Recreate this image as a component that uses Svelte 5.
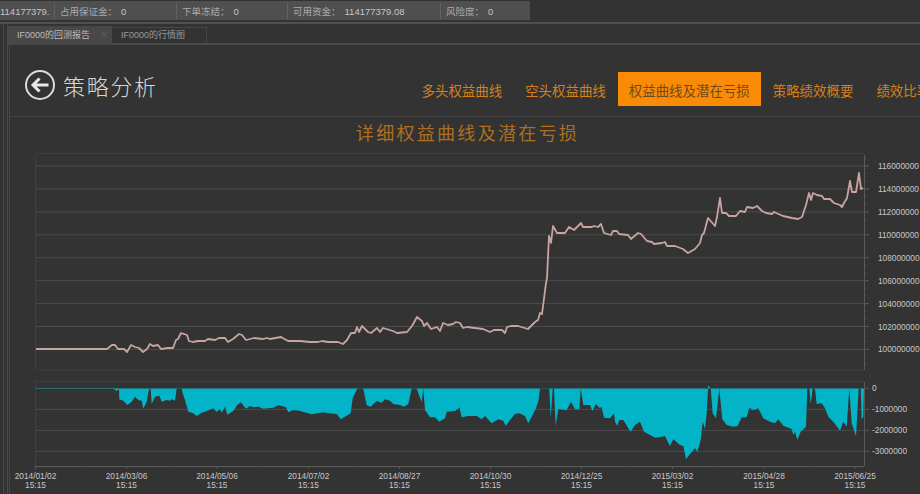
<script>
  const stats = [
    { label: '', value: '114177379.', w: 55 },
    { label: '占用保证金：', value: '0', w: 122 },
    { label: '下单冻结：', value: '0', w: 111 },
    { label: '可用资金：', value: '114177379.08', w: 153 },
    { label: '风险度：', value: '0', w: 89 }
  ];
  const nav = ['多头权益曲线', '空头权益曲线', '权益曲线及潜在亏损', '策略绩效概要', '绩效比率'];

  const equity = [36,349,107,349,112,345,115,345,118,349,124,349,127,352,131,345,135,347,139,348,143,352,147,349,150,344,153,346,158,345,161,349,168,348,173,348,176,340,178,339,181,333,187,335,189,341,193,342,198,341,205,341,208,339,215,340,219,338,225,338,228,342,233,339,239,334,242,335,246,340,254,338,263,339,267,338,270,339,281,337,288,341,300,341,310,342,318,342,322,341,328,342,338,342,343,344,347,340,351,333,355,333,357,327,359,332,362,326,368,332,371,333,377,328,380,332,383,328,393,331,397,333,407,332,412,326,417,317,422,321,424,326,427,323,431,329,437,327,440,331,443,323,448,325,453,324,456,322,460,323,463,328,467,327,483,329,490,332,494,330,502,330,505,333,507,327,511,326,518,326,528,329,535,322,538,320,540,313,542,314,546,283,547,278,549,236,551,243,553,226,557,233,565,233,569,227,574,230,581,223,583,227,592,227,594,226,598,227,601,224,604,233,611,235,613,231,617,231,619,234,628,235,631,239,638,233,641,234,647,241,652,242,654,244,662,243,665,242,667,246,675,246,683,249,688,253,695,249,700,243,702,235,704,233,708,218,715,226,717,217,720,198,722,213,726,213,729,216,736,216,740,211,745,212,747,207,753,208,757,206,762,211,766,213,772,214,774,212,783,216,792,218,798,219,802,217,806,205,809,193,811,200,813,193,817,195,822,196,824,199,830,199,834,203,840,205,842,207,844,203,847,198,850,181,852,192,856,192,859,173,861,189,863,188];
  const equityPoints = equity.join(' ');

  // Drawdown traces, read at 3x from the two halves of the lower pane.
  const ddLeft = [340,176,350,183,357,178,358,208,370,212,382,225,395,215,405,200,415,210,425,212,430,236,440,215,447,178,452,178,455,222,465,200,478,197,485,215,500,210,510,212,515,208,525,212,530,176,545,176,548,190,555,210,565,245,580,250,590,258,605,248,620,243,640,235,650,246,660,237,665,248,675,230,682,254,700,243,712,225,722,217,738,236,750,228,760,232,775,230,790,236,820,233,835,226,845,228,858,232,865,247,880,240,900,243,935,253,970,247,985,250,1010,252,1022,268,1040,257,1052,250,1058,205,1072,176,1090,176,1100,226,1112,230,1130,213,1145,218,1155,208,1170,212,1180,222,1200,225,1212,230,1225,222,1235,176,1250,176,1265,217,1270,176,1275,240,1290,262,1305,262,1318,275,1335,265,1340,245,1365,243,1380,232];
  const ddRight = [0,240,5,262,25,258,50,258,65,268,75,258,95,280,115,268,130,272,137,288,150,270,165,252,178,250,195,258,205,280,215,260,228,235,235,215,240,176,262,176,268,176,272,265,278,176,282,176,287,288,295,237,320,240,333,215,345,238,358,238,362,176,370,225,390,225,397,243,408,222,418,233,425,232,432,263,450,265,462,250,465,275,472,288,478,270,490,270,505,295,512,305,525,285,540,275,552,305,565,312,585,323,605,320,615,318,630,348,640,328,660,345,670,348,678,388,690,372,705,355,712,365,722,330,728,275,735,297,740,250,745,165,752,176,758,250,768,265,778,176,787,268,800,285,820,290,833,288,845,262,860,262,868,233,880,240,895,235,910,265,930,275,945,280,955,268,970,287,995,297,1000,315,1005,305,1012,330,1022,305,1038,290,1042,176,1048,176,1052,222,1058,176,1065,176,1070,222,1085,220,1095,235,1105,260,1120,275,1140,302,1150,275,1160,290,1168,176,1175,280,1188,318,1196,176,1202,176,1205,268,1210,262];
  const toPage = (arr, dx) => {
    const out = [];
    for (let i = 0; i < arr.length; i += 2) out.push(`${(dx + arr[i] / 3).toFixed(1)},${(330 + arr[i + 1] / 3).toFixed(1)}`);
    return out;
  };
  const ddPoints = ['113,388.4', ...toPage(ddLeft, 0), ...toPage(ddRight, 460), '864,388.4'].join(' ');

  const upperTicks = ['116000000','114000000','112000000','110000000','108000000','106000000','104000000','102000000','100000000']
    .map((label, i) => ({ label, y: 166 + i * 22.93 }));
  const upperMinor = [];
  for (let y = 158.3; y < 370; y += 7.64) upperMinor.push(y);
  const lowerTicks = [
    { label: '0', y: 388.4 },
    { label: '-1000000', y: 409.4 },
    { label: '-2000000', y: 430.4 },
    { label: '-3000000', y: 451.4 }
  ];
  const dates = ['2014/01/02','2014/03/06','2014/05/06','2014/07/02','2014/08/27','2014/10/30','2014/12/25','2015/03/02','2015/04/28','2015/06/25'];
  const xs = [35.5, 126.5, 217, 308.5, 399.5, 490.5, 581.5, 672.5, 764, 855];
</script>

<div class="app">
  <div class="status">
    {#each stats as s}
      <div class="stat" style:width="{s.w}px">
        {#if s.label}<span class="stat-label">{s.label}</span>{/if}<span class="stat-value">{s.value}</span>
      </div>
    {/each}
  </div>

  <div class="shell">
    <div class="rail">
      <div class="stage">
        <div class="tabs">
          <div class="tab active">IF0000的回测报告<span class="close">×</span></div>
          <div class="tab">IF0000的行情图</div>
        </div>

        <div class="panel">
          <header class="head">
            <div class="brand">
              <svg class="back" viewBox="0 0 32 32" width="32" height="32" aria-hidden="true">
                <circle cx="16" cy="16" r="14" fill="none" stroke="#dcdcdc" stroke-width="2" />
                <path d="M24.5 16H9.5M15.5 9.5L9 16l6.5 6.500" fill="none" stroke="#e8e8e8" stroke-width="3" />
              </svg>
              <h1>策略分析</h1>
            </div>
            <nav class="nav">
              {#each nav as item, i}
                <div class="nav-item" class:on={i === 2}>{item}</div>
              {/each}
            </nav>
          </header>

          <h2 class="title">详细权益曲线及潜在亏损</h2>

          <svg class="chart" viewBox="10 145 910 349" width="910" height="349">
            <path class="frame" d="M35.500 370V153.500H864M35.500 370H864M35.500 466V381.500H864" />
            {#each upperTicks as t}
              <line class="grid" x1="36" x2="864" y1={t.y} y2={t.y} />
            {/each}
            {#each [409.4, 430.4, 451.4] as y}
              <line class="grid" x1="36" x2="864" y1={y} y2={y} />
            {/each}
            <line class="base" x1="35" x2="114" y1="388.4" y2="388.4" />

            <polygon class="dd" points={ddPoints} />
            <polyline class="equity" points={equityPoints} />

            <line class="axis" x1="864.500" x2="864.500" y1="155" y2="370" />
            <line class="axis" x1="864.500" x2="864.500" y1="382" y2="466" />
            <line class="axis" x1="35" x2="864" y1="466.500" y2="466.500" />
            {#each upperMinor as y}
              <line class="minor" x1="865" x2="867" y1={y} y2={y} />
            {/each}
            {#each upperTicks as t}
              <line class="axis" x1="865" x2="869" y1={t.y} y2={t.y} />
              <text class="num" x="878" y={t.y + 3}>{t.label}</text>
            {/each}
            {#each lowerTicks as t}
              <line class="axis" x1="865" x2="869" y1={t.y} y2={t.y} />
              <text class="num" x="872" y={t.y + 3}>{t.label}</text>
            {/each}
            {#each dates as d, i}
              <line class="axis" x1={xs[i]} x2={xs[i]} y1="466" y2="469" />
              {#if i < 9}
                <line class="minor" x1={xs[i] + 45.500} x2={xs[i] + 45.500} y1="466" y2="468" />
              {/if}
              <text class="num mid" x={xs[i]} y="479">{d}</text>
              <text class="num mid" x={xs[i]} y="488">15:15</text>
            {/each}
          </svg>
        </div>
      </div>
    </div>
  </div>
</div>

<style>
  :global(body) { margin: 0; background: #333; }
  .app {
    width: 920px;
    height: 494px;
    overflow: hidden;
    display: flex;
    flex-direction: column;
    background: #333;
    font-family: "Liberation Sans", "Noto Sans CJK SC", sans-serif;
  }
  .status {
    display: flex;
    flex: none;
    width: 530px;
    height: 19px;
    margin-top: 1px;
    background: #4f4f4f;
    color: #c4c4c4;
    font-size: 9.500px;
  }
  .stat {
    box-sizing: border-box;
    display: flex;
    align-items: center;
    padding-left: 5px;
    height: 16px;
    margin-top: 2px;
    border-right: 1px solid #626262;
    white-space: nowrap;
  }
  .stat:first-child { padding-left: 0; }
  .stat:last-child { border-right: 0; }
  .stat-label { margin-right: 4px; color: #aaa; }
  .shell {
    flex: 1;
    min-height: 0;
    display: flex;
    margin-top: 2px;
    padding-left: 3px;
    border-top: 2px solid #505050;
  }
  .rail {
    flex: 1;
    min-width: 0;
    display: flex;
    padding-left: 3px;
    border-left: 1px solid #4a4a4a;
  }
  .stage {
    flex: 1;
    min-width: 0;
    display: flex;
    flex-direction: column;
    margin-top: 1px;
    padding-top: 1px;
    border-left: 1px solid #4a4a4a;
  }
  .tabs {
    display: flex;
    flex: none;
    height: 17px;
    border-bottom: 2px solid #4a4a4a;
  }
  .tab {
    box-sizing: border-box;
    width: 95px;
    height: 17px;
    margin-top: 1px;
    padding-left: 9px;
    border: 1px solid #474747;
    border-bottom: 0;
    border-left: 0;
    color: #9a9a9a;
    font-size: 9px;
    line-height: 15px;
    white-space: nowrap;
  }
  .tab.active {
    position: relative;
    width: 104px;
    margin-top: 0;
    height: 19px;
    padding-left: 9px;
    background: #484848;
    border: 0;
    color: #bdbdbd;
    line-height: 18px;
  }
  .close {
    position: absolute;
    left: 93px;
    top: 0;
    color: #5e5e5e;
    font-size: 12px;
  }
  .panel {
    flex: 1;
    min-height: 0;
    margin-left: 1px;
    border-left: 1px solid #464646;
    overflow: hidden;
  }
  .head {
    box-sizing: border-box;
    width: 910px;
    height: 72px;
    display: flex;
    align-items: flex-end;
    padding-bottom: 10px;
    border-bottom: 1px solid #454545;
    margin-left: -1px;
    padding-left: 1px;
  }
  .brand {
    flex: none;
    box-sizing: border-box;
    width: 401px;
    align-self: flex-start;
    margin-top: 24px;
    padding-left: 14px;
    display: flex;
    align-items: center;
    gap: 7px;
  }
  .back { flex: none; }
  h1 {
    margin: 0;
    color: #d6d6d6;
    font-family: "Noto Sans CJK SC", sans-serif;
    font-size: 22px;
    font-weight: 300;
    letter-spacing: 1.700px;
    line-height: 32px;
  }
  .nav { display: flex; flex: none; gap: 1px; }
  .nav-item {
    height: 34px;
    padding: 0 11.500px 0 10.500px;
    color: #d4801c;
    font-family: "Noto Sans CJK SC", sans-serif;
    font-size: 13.450px;
    line-height: 36px;
    white-space: nowrap;
  }
  .nav-item.on {
    background: #f98b07;
    color: #6f4a1c;
  }
  .title {
    margin: 0;
    height: 28px;
    padding-left: 5px;
    text-align: center;
    color: #ad6f1f;
    font-family: "Noto Sans CJK SC", sans-serif;
    font-size: 18px;
    font-weight: 400;
    letter-spacing: 2.300px;
    line-height: 30px;
  }
  .chart { display: block; }
  .frame { fill: none; stroke: #3e3e3e; stroke-width: 1; }
  .grid { stroke: #4b4b4b; stroke-width: 1; }
  .base { stroke: #2c6f78; stroke-width: 1; }
  .dd { fill: #03b3c8; }
  .equity {
    fill: none;
    stroke: #c8a4a1;
    stroke-width: 1.800;
    stroke-linejoin: round;
  }
  .axis { stroke: #5a5a5a; stroke-width: 1; }
  .minor { stroke: #484848; stroke-width: 1; }
  .num {
    fill: #c8c8c8;
    font-family: "Liberation Sans", sans-serif;
    font-size: 8.300px;
  }
  .mid { text-anchor: middle; }
</style>
